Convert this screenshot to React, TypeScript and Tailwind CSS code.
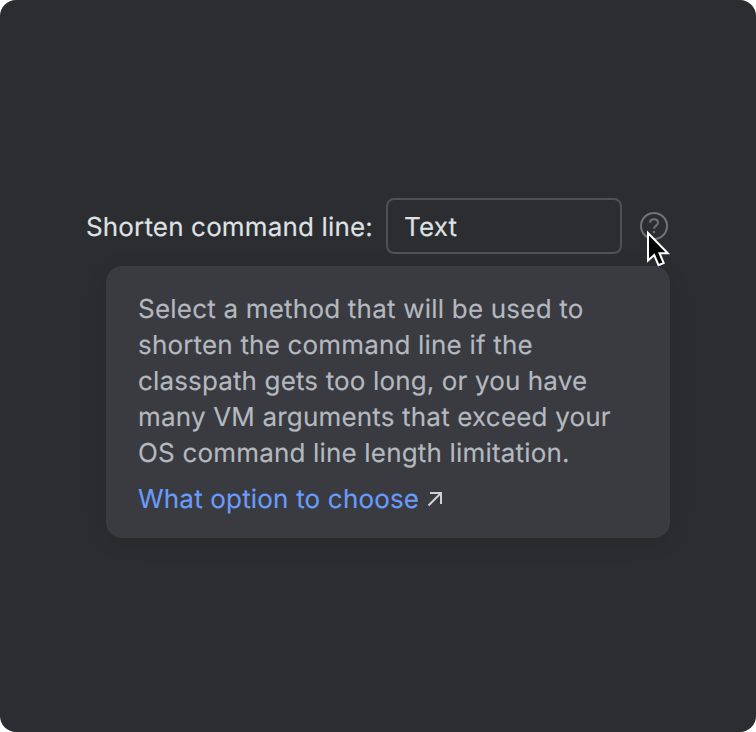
export default function App() {
  return (
    <div className="h-[732px] w-[756px] bg-white font-['Inter',sans-serif] [text-rendering:geometricPrecision] [-webkit-text-stroke:0.15px_currentColor]">
      <main className="h-full w-full overflow-hidden rounded-[16px] bg-[#2b2d30] pt-[198px]">
        <div className="flex h-14 items-center pl-[86px]">
          <label className="w-[300px] whitespace-nowrap pt-1 text-[26px] leading-8 tracking-[0.15px] text-[#dfe1e5]">Shorten command line:</label>
          <div className="flex h-14 w-[236px] items-center rounded-[8px] border-2 border-[#4e5157] pl-4 pt-1 text-[26px] leading-8 tracking-[0.15px] text-[#dfe1e5]">Text</div>
          <div className="relative ml-[18px] h-7 w-7">
            <svg width="28" height="28" viewBox="0 0 28 28" fill="none" stroke="#6f737a" strokeWidth="2">
              <circle cx="14" cy="14" r="13" />
              <path d="M10 10.8C10 8.5 11.7 7.3 14 7.3s4 1.4 4 3.5c0 2.7-4 3-4 6" />
              <circle cx="14" cy="20" r="1.25" fill="#6f737a" stroke="none" />
            </svg>
            <svg className="absolute left-[6px] top-[17px]" width="26" height="40" viewBox="0 0 26 40">
              <path d="M2 4v27.5l6.2-5.5 4.3 10.2 5.2-2.2-4.2-9.8h8.3z" fill="#000" stroke="#fff" strokeWidth="2" />
            </svg>
          </div>
        </div>
        <section className="ml-[106px] mt-3 h-[272px] w-[564px] rounded-[16px] bg-[#393b40] pl-8 pt-[26px] text-[26px] leading-9 tracking-[0.18px] text-[#b4b8bf] shadow-[0_4px_24px_rgba(0,0,0,0.08)]">
          <p className="whitespace-nowrap"><span className="tracking-[0.21px]">Select a method that will be used to</span><br />shorten the command line if the<br /><span className="tracking-[0.14px]">classpath gets too long, or you have</span><br />many VM arguments that exceed your<br />OS command line length limitation.</p>
          <div className="mt-[10px] flex items-center">
            <span className="w-[288px] whitespace-nowrap text-[#6b9bfa]">What option to choose</span>
            <svg className="mb-0.5" width="18" height="18" viewBox="0 0 18 18" fill="none" stroke="#ced0d6" strokeWidth="2"><path d="M4 3h11v11M15 3 2.5 15.5" /></svg>
          </div>
        </section>
      </main>
    </div>
  );
}
